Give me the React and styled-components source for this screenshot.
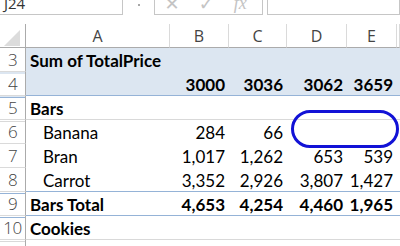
import React from "react";
import styled, { createGlobalStyle } from "styled-components";

const Global = createGlobalStyle`
    html, body {
        margin : 0;
        padding : 0;
        background : #ffffff;
    }
`

const Page = styled.div`
    width : 400px;
    height : 246px;
    overflow : hidden;
    position : relative;
    background : #ffffff;
    font-family : "Lato", "Open Sans", sans-serif;
`

const FormulaBar = styled.div`
    display : flex;
    height : 15px;
    align-items : stretch;
`

const Box = styled.div`
    box-sizing : border-box;
    width : ${props=>props.width}px;
    margin-left : ${props=>props.gap || 0}px;
    border : 1px solid #c6c6c6;
    border-top : none;
    display : flex;
    align-items : flex-end;
    overflow : hidden;
    color : #333;
    font-family : "Open Sans", sans-serif;
    font-size : 15px;
    line-height : 15px;
    padding : 0 0 3px 4px;
`

const Dots = styled.div`
    width : 31px;
    display : flex;
    justify-content : center;
    padding-left : 2px;
    box-sizing : border-box;
`

const Dot = styled.span`
    width : 2px;
    height : 2px;
    margin-top : 4px;
    background : #8a8a8a;
    border-radius : 1px;
`

const FxIcon = styled.span`
    color : #c4c4c4;
    font-size : ${props=>props.size || 16}px;
    line-height : 15px;
    margin-left : ${props=>props.left}px;
    font-family : ${props=>props.serif ? `"Liberation Serif", serif` : `"DejaVu Sans", sans-serif`};
    font-style : ${props=>props.serif ? "italic" : "normal"};
`

const Sheet = styled.div`
    margin-top : 9px;
`

const Row = styled.div`
    display : grid;
    grid-template-columns : 26px 144px 59px 58px 60px 50px 3px;
    height : 24px;
`

const HeadCell = styled.div`
    box-sizing : border-box;
    border-bottom : 1px solid #ababab;
    border-right : 1px solid ${props=>props.corner ? "#ababab" : "#dadada"};
    display : flex;
    align-items : center;
    justify-content : center;
    font-family : "Open Sans", sans-serif;
    font-size : 16px;
    color : #444;
    padding-top : 1px;
`

const Corner = styled.div`
    width : 0;
    height : 0;
    border-left : 16px solid transparent;
    border-bottom : 16px solid #dcdcdc;
    margin : 4px 0 0 -2px;
`

const RowNum = styled.div`
    box-sizing : border-box;
    border-right : 1px solid #ababab;
    border-bottom : 1px solid ${props=>props.noLine ? "transparent" : "#dadada"};
    display : flex;
    align-items : center;
    justify-content : center;
    font-family : "Open Sans", sans-serif;
    font-size : 17px;
    font-weight : 300;
    color : #444;
    letter-spacing : -0.5px;
`

const lineColor = {
    gray : "#d9d9d9",
    blue : "#95b3d7",
    none : "transparent",
}

const Cell = styled.div`
    box-sizing : border-box;
    background : ${props=>props.shade ? "#dce6f1" : "transparent"};
    border-bottom : 1px solid ${props=>lineColor[props.line || "none"]};
    display : flex;
    align-items : center;
    justify-content : ${props=>props.left ? "flex-start" : "flex-end"};
    padding : 1px 4px 0 ${props=>props.indent ? 17 : 4}px;
    font-size : 17px;
    font-weight : ${props=>props.bold ? 700 : 400};
    color : #000;
    white-space : nowrap;
`

const Circle = styled.div`
    position : absolute;
    left : 291px;
    top : 110px;
    width : 108px;
    height : 38px;
    box-sizing : border-box;
    border : 3px solid #1212d6;
    border-radius : 19px;
`

const columns = ["A","B","C","D","E",""]

const rows = [
    {n : 3, label : "Sum of TotalPrice", values : ["","","","",""], bold : true, shade : true},
    {n : 4, label : "", values : ["3000","3036","3062","3659",""], bold : true, shade : true, line : "blue"},
    {n : 5, label : "Bars", values : ["","","","",""], bold : true, line : "gray"},
    {n : 6, label : "Banana", values : ["284","66","","",""], indent : true},
    {n : 7, label : "Bran", values : ["1,017","1,262","653","539",""], indent : true},
    {n : 8, label : "Carrot", values : ["3,352","2,926","3,807","1,427",""], indent : true, line : "blue"},
    {n : 9, label : "Bars Total", values : ["4,653","4,254","4,460","1,965",""], bold : true, line : "blue"},
    {n : 10, label : "Cookies", values : ["","","","",""], bold : true, line : "gray"},
]

const App = () => {
    return(
        <>
        <Global />
        <Page>
            <FormulaBar>
                <Box width={124} style={{marginLeft : -1}}>J24</Box>
                <Dots><Dot /></Dots>
                <Box width={110} gap={0}>
                    <FxIcon left={6} size={18}>✕</FxIcon>
                    <FxIcon left={19} size={18}>✓</FxIcon>
                    <FxIcon left={20} size={18} serif>fx</FxIcon>
                </Box>
                <Box width={133} gap={4}></Box>
            </FormulaBar>
            <Sheet>
                <Row>
                    <HeadCell corner><Corner /></HeadCell>
                    {columns.map(c=>(
                        <HeadCell key={c}>{c}</HeadCell>
                    ))}
                </Row>
                {rows.map(r=>(
                    <Row key={r.n}>
                        <RowNum>{r.n}</RowNum>
                        <Cell left bold={r.bold} indent={r.indent} shade={r.shade} line={r.line}>{r.label}</Cell>
                        {r.values.map((v,i)=>(
                            <Cell key={i} bold={r.bold} shade={r.shade} line={r.line}>{v}</Cell>
                        ))}
                        <Cell shade={r.shade} line={r.line}></Cell>
                    </Row>
                ))}
                <Row>
                    <RowNum noLine>11</RowNum>
                </Row>
            </Sheet>
            <Circle />
        </Page>
        </>
    )
}

export default App;
